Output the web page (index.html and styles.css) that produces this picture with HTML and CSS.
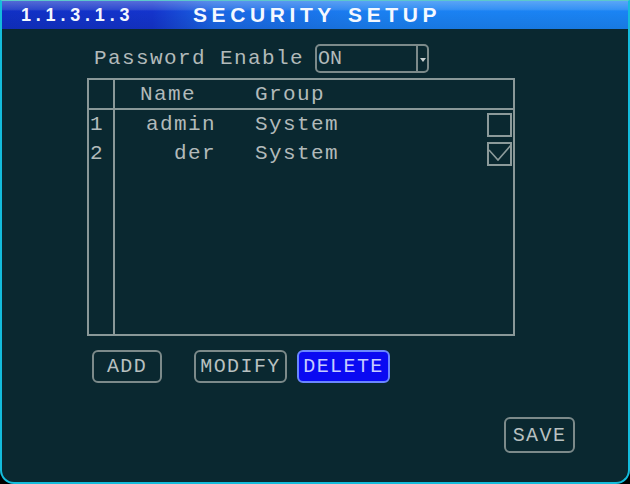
FILE: index.html
```html
<!DOCTYPE html>
<html lang="en">
<head>
  <meta charset="UTF-8">
  <title>Security Setup</title>
  <link rel="stylesheet" href="styles.css">
</head>
<body>
  <div class="screen">
    <div class="titlebar">
      <span class="path">1.1.3.1.3</span>
      <span class="title">SECURITY SETUP</span>
    </div>
    <div class="content">
      <div class="pw-row">
        <span class="label">Password Enable</span>
        <div class="select">
          <span class="select-value">ON</span>
          <span class="select-arrow"></span>
        </div>
      </div>

      <div class="users">
        <div class="row head">
          <span class="num"></span>
          <span class="name">Name</span>
          <span class="group">Group</span>
          <span class="check"></span>
        </div>
        <div class="row">
          <span class="num">1</span>
          <span class="name">admin</span>
          <span class="group">System</span>
          <span class="check">
            <svg width="25" height="24" viewBox="0 0 25 24"><rect x="1" y="1" width="23" height="22" fill="none" stroke="#8c9a9a" stroke-width="2"/></svg>
          </span>
        </div>
        <div class="row">
          <span class="num">2</span>
          <span class="name">der</span>
          <span class="group">System</span>
          <span class="check">
            <svg width="25" height="24" viewBox="0 0 25 24"><rect x="1" y="1" width="23" height="22" fill="none" stroke="#8c9a9a" stroke-width="2"/><polyline points="2,8 11,18 24,3" fill="none" stroke="#8c9a9a" stroke-width="1.6"/></svg>
          </span>
        </div>
        <div class="filler">
          <span class="num"></span>
        </div>
      </div>

      <div class="actions">
        <button class="btn btn-add">ADD</button>
        <button class="btn btn-modify">MODIFY</button>
        <button class="btn btn-delete">DELETE</button>
      </div>

      <div class="footer">
        <button class="btn btn-save">SAVE</button>
      </div>
    </div>
  </div>
</body>
</html>
```

FILE: styles.css
```css
body {
  margin: 0;
  background-color: #000;
}
.screen {
  width: 630px;
  height: 484px;
  box-sizing: border-box;
  background-color: #0a2830; /* fundo verde-petróleo do DVR */
  border: 2px solid #14bcdc;
  border-top: 1px solid #5cc8cc;
  border-radius: 0 0 14px 14px;
  display: flex;
  flex-direction: column;
  overflow: hidden;
  font-family: 'Liberation Mono', 'DejaVu Sans Mono', monospace;
  color: #b2baba;
}
.titlebar {
  height: 28px;
  flex: none;
  display: flex;
  align-items: center;
  padding-left: 19px;
  background:
    linear-gradient(to bottom, rgba(255, 255, 255, 0.28) 0, rgba(255, 255, 255, 0.12) 30%, rgba(255, 255, 255, 0) 36%, rgba(0, 0, 0, 0.08) 100%),
    linear-gradient(to right, #1030c4 0, #1434cc 24%, #1a66e4 34%, #1a80f2 60%, #1a84f4 100%);
  font-family: 'Liberation Sans', Arial, sans-serif;
  font-weight: bold;
  color: #f4f8ff;
}
.path {
  font-size: 18px;
  letter-spacing: 4.8px;
  width: 172px;
}
.title {
  font-size: 21px;
  letter-spacing: 4.6px;
  word-spacing: 2px;
}
.content {
  flex: 1;
  padding: 15px 0 0 85px;
  font-size: 21px;
  letter-spacing: 1.4px;
}
/* Linha "Password Enable" */
.pw-row {
  display: flex;
  align-items: center;
  height: 29px;
}
.label {
  width: 221px;
  margin-left: 7px;
  flex: none;
}
.select {
  width: 114px;
  height: 29px;
  box-sizing: border-box;
  border: 2px solid #7c8a8a;
  border-radius: 5px;
  display: flex;
  align-items: center;
}
.select-value {
  flex: 1;
  padding-left: 1px;
  font-size: 20px;
  letter-spacing: 0;
}
.select-arrow {
  width: 9px;
  height: 25px;
  border-left: 2px solid #7c8a8a;
  position: relative;
}
.select-arrow::after {
  content: '';
  position: absolute;
  left: 2px;
  top: 12px;
  border-left: 3px solid transparent;
  border-right: 3px solid transparent;
  border-top: 4px solid #c8d0d0;
}
/* Tabela de usuários */
.users {
  margin-top: 5px;
  width: 428px;
  height: 258px;
  box-sizing: border-box;
  border: 2px solid #8a9898;
  display: flex;
  flex-direction: column;
}
.row {
  display: flex;
  align-items: center;
  height: 29px;
  flex: none;
}
.row.head {
  height: 28px;
  border-bottom: 2px solid #8a9898;
}
.num {
  width: 26px;
  height: 100%;
  flex: none;
  box-sizing: border-box;
  border-right: 2px solid #8a9898;
  padding-left: 1px;
  display: flex;
  align-items: center;
}
.name {
  width: 101px;
  text-align: right;
  flex: none;
}
.head .name {
  text-align: left;
  padding-left: 25px;
  width: 76px;
}
.group {
  flex: 1;
  padding-left: 39px;
}
.check {
  width: 25px;
  height: 24px;
  margin-right: 1px;
  flex: none;
}
.filler {
  flex: 1;
  display: flex;
}
.filler .num {
  height: auto;
}
/* Botões */
.actions {
  display: flex;
  margin-top: 14px;
  margin-left: 5px;
}
.btn {
  height: 33px;
  box-sizing: border-box;
  background: transparent;
  border: 2px solid #7c8a8a;
  border-radius: 6px;
  color: #b8c0c0;
  font-family: 'Liberation Mono', 'DejaVu Sans Mono', monospace;
  font-size: 20px;
  letter-spacing: 1.4px;
  padding: 0;
}
.btn-add {
  width: 70px;
}
.btn-modify {
  width: 93px;
  margin-left: 32px;
}
.btn-delete {
  width: 93px;
  margin-left: 10px;
  background-color: #0a0af2;
  border-color: #6a86ff;
  color: #c6ccff;
}
.footer {
  display: flex;
  justify-content: flex-end;
  margin-top: 34px;
  padding-right: 53px;
}
.btn-save {
  width: 71px;
  height: 36px;
}
```
